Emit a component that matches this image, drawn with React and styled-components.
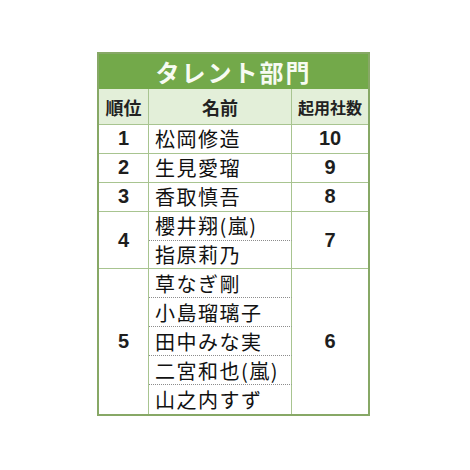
import React from "react";
import styled, { createGlobalStyle } from "styled-components";

const GlobalStyle = createGlobalStyle`
  html, body {
    margin: 0;
    padding: 0;
    background: #ffffff;
  }
  body {
    font-family: "Noto Sans CJK JP", "Noto Sans", sans-serif;
    color: #1a1a1a;
  }
`;

const ranking = [
  { rank: 1, count: 10, names: ["松岡修造"] },
  { rank: 2, count: 9, names: ["生見愛瑠"] },
  { rank: 3, count: 8, names: ["香取慎吾"] },
  { rank: 4, count: 7, names: ["櫻井翔(嵐)", "指原莉乃"] },
  {
    rank: 5,
    count: 6,
    names: ["草なぎ剛", "小島瑠璃子", "田中みな実", "二宮和也(嵐)", "山之内すず"],
  },
];

const Page = styled.div`
  padding: 52px 0 0 97px;
`;

const Board = styled.div`
  width: 273px;
  box-sizing: border-box;
  border: 2px solid #87a866;
`;

const Title = styled.div`
  height: 35px;
  background: #73a94a;
  color: #f7fbf2;
  font-size: 24px;
  font-weight: 700;
  letter-spacing: 2px;
  display: flex;
  align-items: center;
  justify-content: center;
`;

const Grid = styled.div`
  display: grid;
  grid-template-columns: 50px 143px 1fr;
  grid-template-rows: 36px;
  grid-auto-rows: 28.9px;
`;

const Head = styled.div`
  box-sizing: border-box;
  background: #e3efd9;
  border-bottom: 1px solid #a8c490;
  border-right: ${(p) => (p.$last ? "none" : "1px solid #a8c490")};
  display: flex;
  align-items: center;
  justify-content: center;
  font-size: ${(p) => (p.$small ? "16px" : "18px")};
  font-weight: 700;
  color: #222;
`;

const NumCell = styled.div`
  grid-row: span ${(p) => p.$span};
  box-sizing: border-box;
  border-bottom: ${(p) => (p.$end ? "none" : "1px solid #a8c490")};
  border-right: ${(p) => (p.$last ? "none" : "1px solid #a8c490")};
  display: flex;
  align-items: center;
  justify-content: center;
  font-family: "Liberation Sans", Arial, sans-serif;
  font-weight: 700;
  font-size: 20px;
  color: #1e1e1e;
`;

const NameCell = styled.div`
  box-sizing: border-box;
  border-right: 1px solid #a8c490;
  border-bottom: ${(p) =>
    p.$end ? "none" : p.$dotted ? "1px dotted #8c8c8c" : "1px solid #a8c490"};
  display: flex;
  align-items: center;
  padding-left: 6px;
  font-size: 20px;
  letter-spacing: 1.5px;
  color: #111;
  white-space: nowrap;
`;

export default function App() {
  return (
    <>
      <GlobalStyle />
      <Page>
        <Board>
          <Title>タレント部門</Title>
          <Grid>
            <Head>順位</Head>
            <Head>名前</Head>
            <Head $last $small>
              起用社数
            </Head>
            {ranking.map((g, gi) => {
              const end = gi === ranking.length - 1;
              return (
                <React.Fragment key={g.rank}>
                  <NumCell $span={g.names.length} $end={end}>
                    {g.rank}
                  </NumCell>
                  <NameCell $dotted={g.names.length > 1} $end={end && g.names.length === 1}>
                    {g.names[0]}
                  </NameCell>
                  <NumCell $span={g.names.length} $end={end} $last>
                    {g.count}
                  </NumCell>
                  {g.names.slice(1).map((n, i) => (
                    <NameCell
                      key={n}
                      $dotted={i < g.names.length - 2}
                      $end={end && i === g.names.length - 2}
                    >
                      {n}
                    </NameCell>
                  ))}
                </React.Fragment>
              );
            })}
          </Grid>
        </Board>
      </Page>
    </>
  );
}
